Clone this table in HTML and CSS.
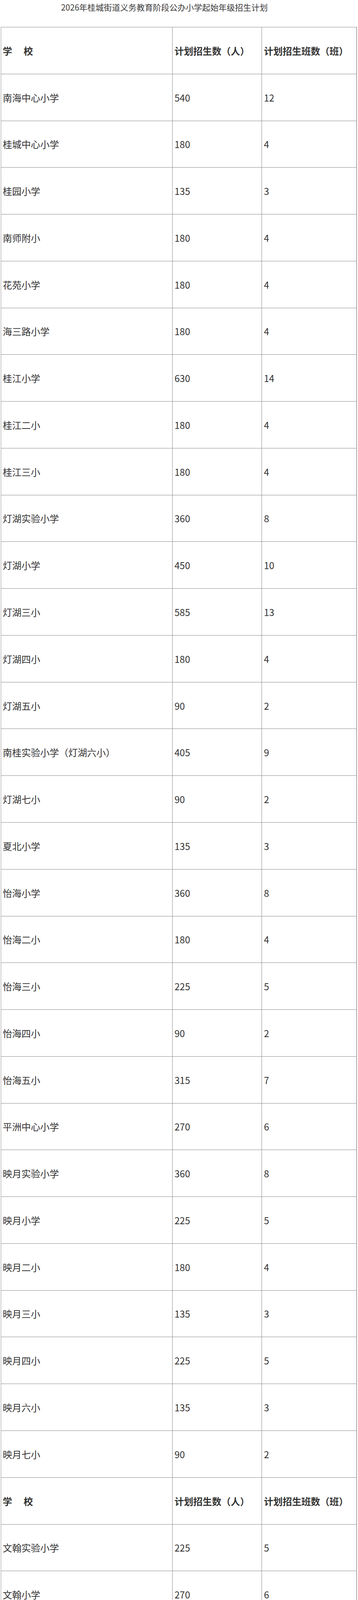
FILE: index.html
```html
<!DOCTYPE html>
<html lang="zh-CN">
<head>
<meta charset="utf-8">
<title>2026年桂城街道义务教育阶段公办小学起始年级招生计划</title>
<link rel="stylesheet" href="styles.css">
</head>
<body>
<h1 class="title">2026年桂城街道义务教育阶段公办小学起始年级招生计划</h1>
<table class="plan">
<colgroup><col class="c1"><col class="c2"><col class="c3"></colgroup>
<tbody>
<tr class="head"><td>学&emsp;&nbsp;校</td><td>计划招生数（人）</td><td>计划招生班数（班）</td></tr>
<tr><td>南海中心小学</td><td>540</td><td>12</td></tr>
<tr><td>桂城中心小学</td><td>180</td><td>4</td></tr>
<tr><td>桂园小学</td><td>135</td><td>3</td></tr>
<tr><td>南师附小</td><td>180</td><td>4</td></tr>
<tr><td>花苑小学</td><td>180</td><td>4</td></tr>
<tr><td>海三路小学</td><td>180</td><td>4</td></tr>
<tr><td>桂江小学</td><td>630</td><td>14</td></tr>
<tr><td>桂江二小</td><td>180</td><td>4</td></tr>
<tr><td>桂江三小</td><td>180</td><td>4</td></tr>
<tr><td>灯湖实验小学</td><td>360</td><td>8</td></tr>
<tr><td>灯湖小学</td><td>450</td><td>10</td></tr>
<tr><td>灯湖三小</td><td>585</td><td>13</td></tr>
<tr><td>灯湖四小</td><td>180</td><td>4</td></tr>
<tr><td>灯湖五小</td><td>90</td><td>2</td></tr>
<tr><td>南桂实验小学（灯湖六小）</td><td>405</td><td>9</td></tr>
<tr><td>灯湖七小</td><td>90</td><td>2</td></tr>
<tr><td>夏北小学</td><td>135</td><td>3</td></tr>
<tr><td>怡海小学</td><td>360</td><td>8</td></tr>
<tr><td>怡海二小</td><td>180</td><td>4</td></tr>
<tr><td>怡海三小</td><td>225</td><td>5</td></tr>
<tr><td>怡海四小</td><td>90</td><td>2</td></tr>
<tr><td>怡海五小</td><td>315</td><td>7</td></tr>
<tr><td>平洲中心小学</td><td>270</td><td>6</td></tr>
<tr><td>映月实验小学</td><td>360</td><td>8</td></tr>
<tr><td>映月小学</td><td>225</td><td>5</td></tr>
<tr><td>映月二小</td><td>180</td><td>4</td></tr>
<tr><td>映月三小</td><td>135</td><td>3</td></tr>
<tr><td>映月四小</td><td>225</td><td>5</td></tr>
<tr><td>映月六小</td><td>135</td><td>3</td></tr>
<tr><td>映月七小</td><td>90</td><td>2</td></tr>
<tr class="head"><td>学&emsp;&nbsp;校</td><td>计划招生数（人）</td><td>计划招生班数（班）</td></tr>
<tr><td>文翰实验小学</td><td>225</td><td>5</td></tr>
<tr><td>文翰小学</td><td>270</td><td>6</td></tr>
<tr><td>文翰二小</td><td>225</td><td>5</td></tr>
<tr><td>文翰三小</td><td>90</td><td>2</td></tr>
<tr><td>文翰四小</td><td>180</td><td>4</td></tr>
<tr><td>龙湾实验学校（小学部）</td><td>90</td><td>2</td></tr>
<tr><td>石门怡海学校（小学部）</td><td>135</td><td>3</td></tr>
<tr class="last"><td>桂城中学实验学校（小学部）</td><td>90</td><td>2</td></tr>
</tbody>
</table>
</body>
</html>
```
FILE: styles.css
```css
html, body {
  margin: 0;
  padding: 0;
  background: #fff;
}
body {
  font-family: "Noto Sans CJK SC", "Microsoft YaHei", sans-serif;
  color: #333;
}
.title {
  width: 842px;
  margin: 0 0 33px 0;
  font-size: 21px;
  font-weight: 400;
  line-height: 36px;
  text-align: center;
  color: #3a3a3a;
}
.plan {
  margin-left: 2px;
  width: 911px;
  table-layout: fixed;
  border-collapse: collapse;
  font-size: 24px;
}
.plan .c1 { width: 439px; }
.plan .c2 { width: 229px; }
.plan .c3 { width: 243px; }
.plan tr {
  height: 119.77px;
}
.plan td {
  border: 1px solid #8a8a8a;
  padding: 0 5px;
  vertical-align: middle;
  text-align: left;
  line-height: 1.3;
  white-space: nowrap;
}
.plan td:first-child {
  border-left-color: #999;
  padding-left: 4px;
}
.plan td:last-child {
  border-right-color: #555;
}
.plan .last td {
  border-bottom-color: #333;
}
.plan .head td {
  font-weight: 700;
  color: #333;
}
```
